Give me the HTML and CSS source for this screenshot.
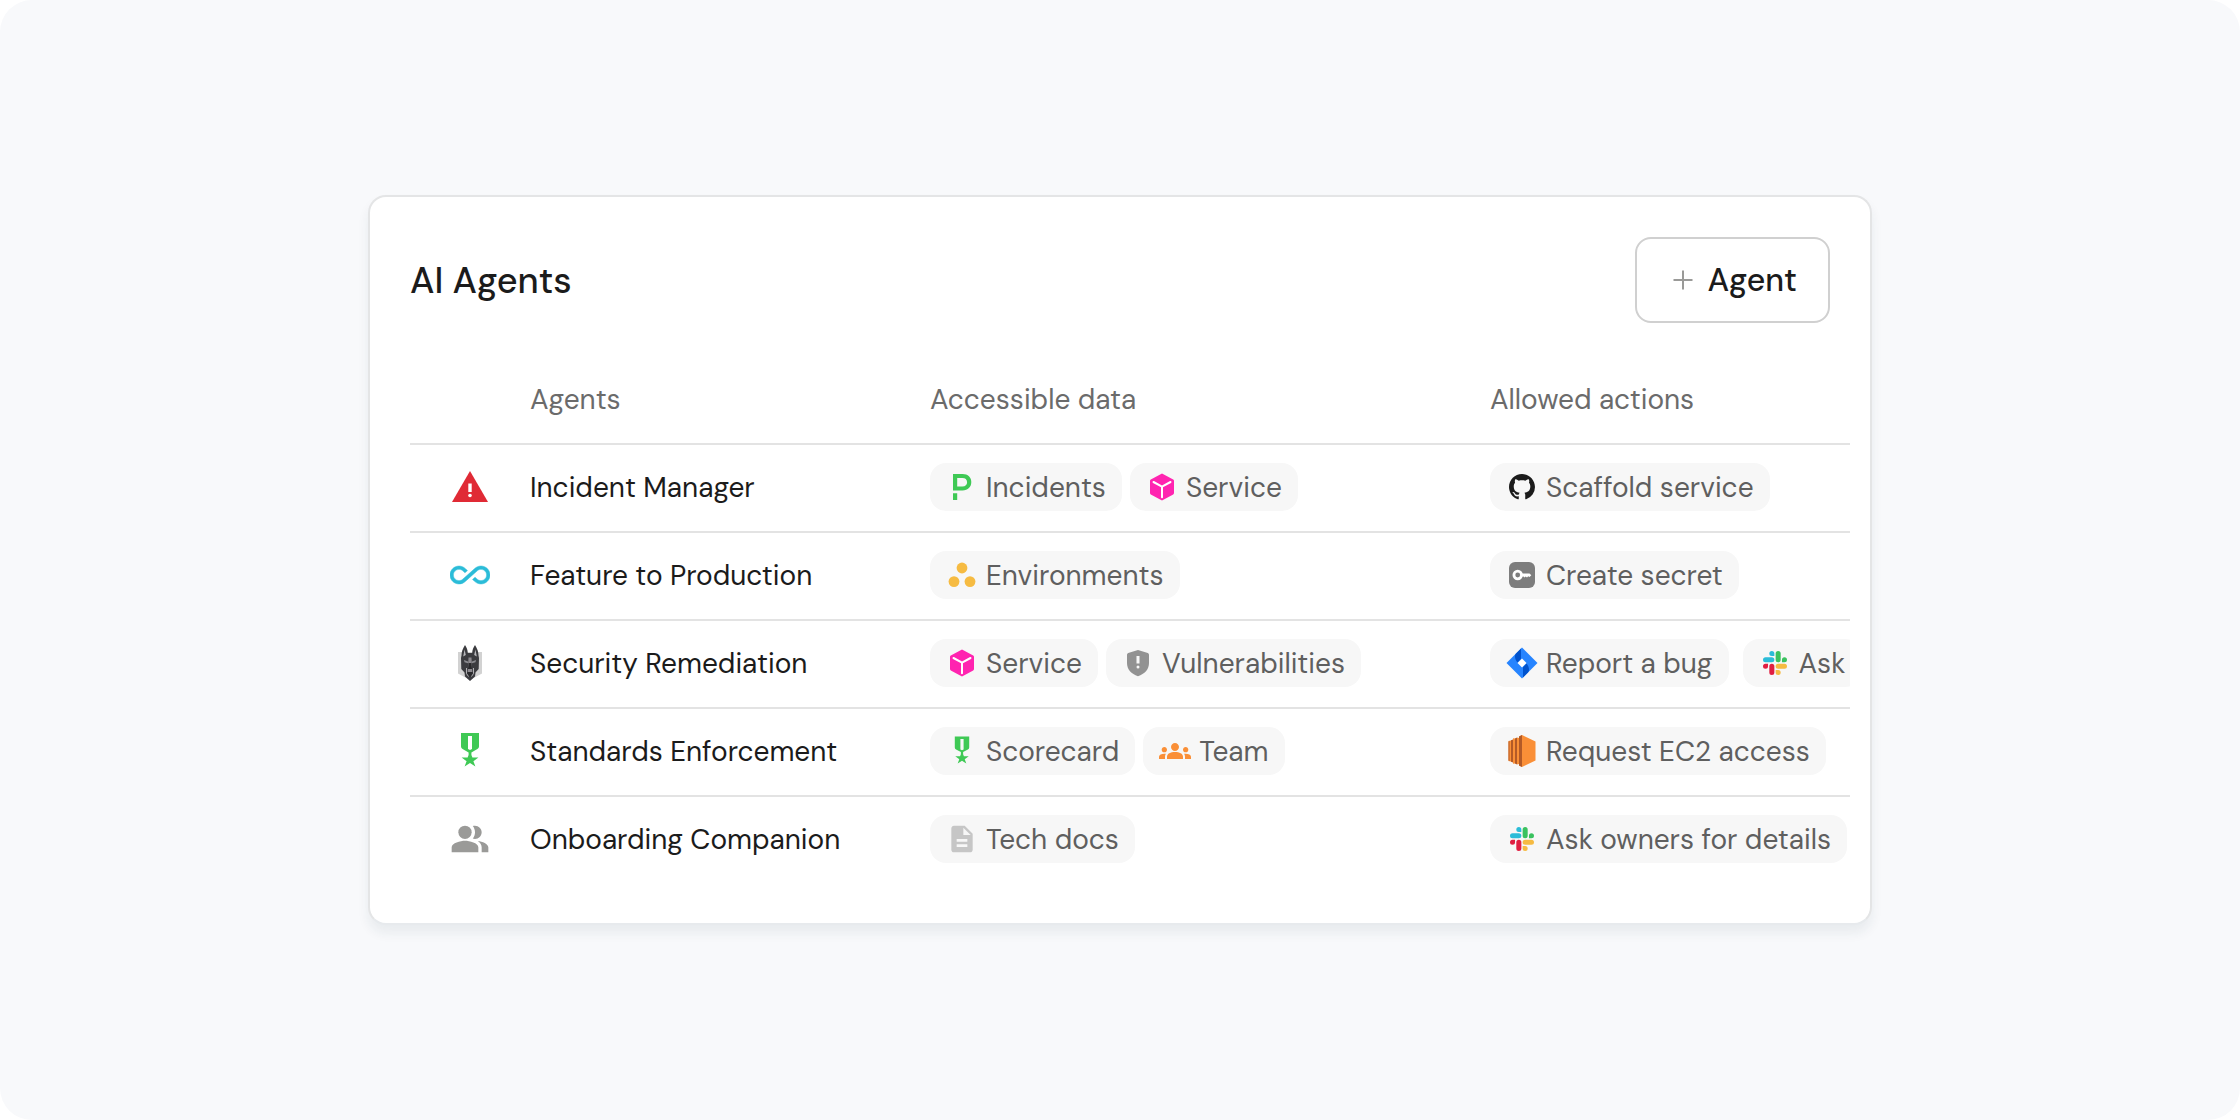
FILE: index.html
```html
<!DOCTYPE html>
<html lang="en">
<head>
  <meta charset="UTF-8" />
  <meta name="viewport" content="width=device-width, initial-scale=1.0"/>
  <title>AI Agents</title>
  <link rel="stylesheet" href="styles.css">
</head>
<body>
  <!-- Icons used more than once -->
  <svg class="sprite" aria-hidden="true">
    <symbol id="medal" viewBox="0 0 40 40">
      <path fill="#3fc955" fill-rule="evenodd" d="M11 2h18v13.5a3 3 0 0 1-1.6 2.6L21.4 21.4V24l1 2.6h6l-5 3.6 2 5.3-5.4-3.4-5.4 3.4 2-5.3-5-3.6h6l1-2.6v-2.6l-6-3.3A3 3 0 0 1 11 15.5zM18 5v13l2 1 2-1V5z"/>
    </symbol>
    <symbol id="cube" viewBox="0 0 32 32">
      <path fill="#ff24b0" d="M16 2.5l11.2 6.1a1.6 1.6 0 0 1 .8 1.4v12a1.6 1.6 0 0 1-.8 1.4L16 29.5 4.8 23.4A1.6 1.6 0 0 1 4 22V10a1.6 1.6 0 0 1 .8-1.4z"/>
      <path fill="none" stroke="#fff" stroke-width="2" stroke-linecap="round" stroke-linejoin="round" d="M7.5 11l8.5 4.7 8.5-4.7M16 15.7v10.6"/>
    </symbol>
    <symbol id="slack" viewBox="-4 -4 32 32">
      <path fill="#e01e41" d="M5.042 15.165a2.528 2.528 0 0 1-2.52 2.523A2.528 2.528 0 0 1 0 15.165a2.527 2.527 0 0 1 2.522-2.52h2.52v2.52zM6.313 15.165a2.527 2.527 0 0 1 2.521-2.52 2.527 2.527 0 0 1 2.521 2.52v6.313A2.528 2.528 0 0 1 8.834 24a2.528 2.528 0 0 1-2.521-2.522v-6.313z"/>
      <path fill="#2bbcd8" d="M8.834 5.042a2.528 2.528 0 0 1-2.521-2.52A2.528 2.528 0 0 1 8.834 0a2.528 2.528 0 0 1 2.521 2.522v2.52H8.834zM8.834 6.313a2.528 2.528 0 0 1 2.521 2.521 2.528 2.528 0 0 1-2.521 2.521H2.522A2.528 2.528 0 0 1 0 8.834a2.528 2.528 0 0 1 2.522-2.521h6.312z"/>
      <path fill="#3ac25f" d="M18.956 8.834a2.528 2.528 0 0 1 2.522-2.521A2.528 2.528 0 0 1 24 8.834a2.528 2.528 0 0 1-2.522 2.521h-2.522V8.834zM17.688 8.834a2.528 2.528 0 0 1-2.523 2.521 2.527 2.527 0 0 1-2.52-2.521V2.522A2.527 2.527 0 0 1 15.165 0a2.528 2.528 0 0 1 2.523 2.522v6.312z"/>
      <path fill="#f6bb42" d="M15.165 18.956a2.528 2.528 0 0 1 2.523 2.522A2.528 2.528 0 0 1 15.165 24a2.527 2.527 0 0 1-2.52-2.522v-2.522h2.52zM15.165 17.688a2.527 2.527 0 0 1-2.52-2.523 2.526 2.526 0 0 1 2.52-2.52h6.313A2.527 2.527 0 0 1 24 15.165a2.528 2.528 0 0 1-2.522 2.523h-6.313z"/>
    </symbol>
  </svg>

  <main class="page">
    <section class="card">
      <header class="card-header">
        <h1>AI Agents</h1>
        <button type="button" class="add-button">
          <svg viewBox="0 0 20 20" aria-hidden="true"><path fill="none" stroke="#9a9a98" stroke-width="2" d="M10 .5v19M.5 10h19"/></svg>
          Agent
        </button>
      </header>

      <table class="agents">
        <colgroup>
          <col class="col-icon"><col class="col-name"><col class="col-data"><col>
        </colgroup>
        <thead>
          <tr>
            <td></td>
            <th scope="col">Agents</th>
            <th scope="col">Accessible data</th>
            <th scope="col">Allowed actions</th>
          </tr>
        </thead>
        <tbody>
          <tr>
            <td>
              <svg class="agent-icon" viewBox="0 0 40 40" aria-hidden="true">
                <path fill="#e02a35" d="M20 4l18 31H2z"/>
                <rect x="18.3" y="16.5" width="3.4" height="8.5" fill="#fff"/>
                <circle cx="20" cy="28.5" r="1.8" fill="#fff"/>
              </svg>
            </td>
            <td>Incident Manager</td>
            <td>
              <div class="chips">
                <span class="chip">
                  <svg viewBox="0 0 32 32" aria-hidden="true"><path fill="#3fc955" fill-rule="evenodd" d="M7 3h9.5c5.5 0 8.8 3.2 8.8 8.1s-3.3 8.4-8.8 8.4H7zM11.2 7v8.5h5.2c3 0 4.7-1.7 4.7-4.3S19.3 7 16.4 7zM7 22.3h4.2V29H7z"/></svg>
                  Incidents
                </span>
                <span class="chip"><svg aria-hidden="true"><use href="#cube"/></svg>Service</span>
              </div>
            </td>
            <td>
              <div class="chips actions">
                <span class="chip">
                  <svg viewBox="-1.85 -1.85 19.7 19.7" aria-hidden="true"><path fill="#1b1b1b" d="M8 0C3.58 0 0 3.58 0 8c0 3.54 2.29 6.53 5.47 7.59.4.07.55-.17.55-.38 0-.19-.01-.82-.01-1.49-2.01.37-2.53-.49-2.69-.94-.09-.23-.48-.94-.82-1.13-.28-.15-.68-.52-.01-.53.63-.01 1.08.58 1.23.82.72 1.21 1.87.87 2.33.66.07-.52.28-.87.51-1.07-1.78-.2-3.64-.89-3.64-3.95 0-.87.31-1.59.82-2.15-.08-.2-.36-1.02.08-2.12 0 0 .67-.21 2.2.82.64-.18 1.32-.27 2-.27s1.36.09 2 .27c1.53-1.04 2.2-.82 2.2-.82.44 1.1.16 1.92.08 2.12.51.56.82 1.27.82 2.15 0 3.07-1.87 3.75-3.65 3.95.29.25.54.73.54 1.48 0 1.07-.01 1.93-.01 2.2 0 .21.15.46.55.38A8.01 8.01 0 0 0 16 8c0-4.42-3.58-8-8-8z"/></svg>
                  Scaffold service
                </span>
              </div>
            </td>
          </tr>
          <tr>
            <td>
              <svg class="agent-icon" viewBox="0 0 24 24" aria-hidden="true"><path fill="#2bbcd8" stroke="#2bbcd8" stroke-width=".3" d="M18.6 6.62c-1.44 0-2.8.56-3.77 1.53L12 10.66 10.48 12h.01L7.8 14.39c-.64.64-1.49.99-2.4.99-1.87 0-3.39-1.51-3.39-3.38S3.53 8.62 5.4 8.62c.91 0 1.76.35 2.44 1.03l1.13 1 1.51-1.34L9.22 8.2C8.2 7.18 6.84 6.62 5.4 6.62 2.42 6.62 0 9.04 0 12s2.42 5.38 5.4 5.38c1.44 0 2.8-.56 3.77-1.53l2.83-2.5.01.01L13.52 12h-.01l2.69-2.39c.64-.64 1.49-.99 2.4-.99 1.87 0 3.39 1.51 3.39 3.38s-1.52 3.38-3.39 3.38c-.9 0-1.76-.35-2.44-1.03l-1.14-1.01-1.51 1.34 1.27 1.12c1.02 1.01 2.37 1.57 3.82 1.57 2.98 0 5.4-2.41 5.4-5.38s-2.42-5.37-5.4-5.37z"/></svg>
            </td>
            <td>Feature to Production</td>
            <td>
              <div class="chips">
                <span class="chip">
                  <svg viewBox="0 0 32 32" fill="#f6bb42" aria-hidden="true"><circle cx="16" cy="9" r="5.4"/><circle cx="8" cy="22.6" r="5.4"/><circle cx="24" cy="22.6" r="5.4"/></svg>
                  Environments
                </span>
              </div>
            </td>
            <td>
              <div class="chips actions">
                <span class="chip">
                  <svg viewBox="0 0 32 32" aria-hidden="true">
                    <rect x="3" y="3" width="26" height="26" rx="6" fill="#7d7d7d"/>
                    <circle cx="11.7" cy="16" r="3.8" fill="none" stroke="#fff" stroke-width="2.8"/>
                    <path fill="#fff" d="M15.5 14.5h8l1.8 1.7-1.8 1.9-1.3-.9-1.2 1.4-1.3-1.2-1.2 1.2-1-1.1h-2z"/>
                  </svg>
                  Create secret
                </span>
              </div>
            </td>
          </tr>
          <tr>
            <td>
              <svg class="agent-icon" viewBox="0 0 40 40" aria-hidden="true">
                <path fill="#d2d2d2" d="M8 9h24v21.5L20 37 8 30.5z"/>
                <path fill="#3b3b3f" d="M15 2c1.8 2.5 2.6 5 2.8 8h4.4c.2-3 1-5.5 2.8-8 2.3 3.6 3.5 7.2 3.5 10.5L29 15l-.3 11-3.2 3.500-.5 4L20 38l-5-4.500-.5-4-3.200-3.500L11 15l.5-2.500C11.500 9.200 12.700 5.600 15 2z"/>
                <path fill="#b9b9bd" d="M14.6 6.5l1.2 5.5-2.6 1.5zM25.4 6.5L24.2 12l2.6 1.5z"/>
                <path fill="#8b8b90" d="M14 17l4 1.5v1.8l-3.5-1zM26 17l-4 1.5v1.8l3.5-1z"/>
                <path fill="#8b888d" d="M18.5 14.5h3l.8 14.5h-4.6z"/>
                <path fill="#29292c" d="M18.5 20h3l.5 6h-4zM17.5 29h5v3L20 34l-2.5-2z"/>
                <path fill="none" stroke="#cfcfd2" stroke-width=".8" d="M16.5 25v5.5l2 3M23.5 25v5.5l-2 3"/>
              </svg>
            </td>
            <td>Security Remediation</td>
            <td>
              <div class="chips">
                <span class="chip"><svg aria-hidden="true"><use href="#cube"/></svg>Service</span>
                <span class="chip">
                  <svg viewBox="0 0 32 32" aria-hidden="true">
                    <path fill="#929292" d="M16 3l9.8 3a1.8 1.8 0 0 1 1.2 1.7V16c0 6.5-4.3 11-11 13.2C9.3 27 5 22.5 5 16V7.7A1.8 1.8 0 0 1 6.2 6z"/>
                    <rect x="14.5" y="9" width="3" height="7.5" fill="#f7f7f7"/>
                    <circle cx="16" cy="20" r="1.5" fill="#f7f7f7"/>
                  </svg>
                  Vulnerabilities
                </span>
              </div>
            </td>
            <td>
              <div class="chips actions">
                <span class="chip">
                  <svg viewBox="0 0 32 32" aria-hidden="true">
                    <path fill="#2684ff" d="M16 .5L31.5 16 16 31.5.5 16z"/>
                    <path fill="#0052cc" d="M15 1.5v10.5l-3.5 3.5C8.5 12.5 8.5 8 10 6.5zM17 30.5V20l3.5-3.5c3 3 3 7.5 1.5 9z"/>
                    <path fill="#fff" d="M16 11.5l4.5 4.5-4.5 4.5-4.5-4.5z"/>
                  </svg>
                  Report a bug
                </span>
                <span class="chip"><svg aria-hidden="true"><use href="#slack"/></svg>Ask</span>
              </div>
            </td>
          </tr>
          <tr>
            <td><svg class="agent-icon" aria-hidden="true"><use href="#medal"/></svg></td>
            <td>Standards Enforcement</td>
            <td>
              <div class="chips">
                <span class="chip"><svg aria-hidden="true"><use href="#medal"/></svg>Scorecard</span>
                <span class="chip">
                  <svg viewBox="0 0 24 24" aria-hidden="true"><path fill="#fa8f37" d="M12 12.75c1.63 0 3.07.39 4.24.9 1.08.48 1.76 1.56 1.76 2.73V18H6v-1.61c0-1.18.68-2.26 1.76-2.73 1.17-.52 2.61-.91 4.24-.91zM4 13c1.1 0 2-.9 2-2s-.9-2-2-2-2 .9-2 2 .9 2 2 2zM5.13 14.1C4.76 14.04 4.39 14 4 14c-.99 0-1.93.21-2.78.58C.48 14.9 0 15.62 0 16.43V18h4.5v-1.61c0-.83.23-1.61.63-2.29zM20 13c1.1 0 2-.9 2-2s-.9-2-2-2-2 .9-2 2 .9 2 2 2zM24 16.43c0-.81-.48-1.53-1.22-1.85-.85-.37-1.79-.58-2.78-.58-.39 0-.76.04-1.13.1.4.68.63 1.46.63 2.29V18H24v-1.57zM12 6c1.66 0 3 1.34 3 3s-1.34 3-3 3-3-1.34-3-3 1.34-3 3-3z"/></svg>
                  Team
                </span>
              </div>
            </td>
            <td>
              <div class="chips actions">
                <span class="chip">
                  <svg viewBox="0 0 32 32" aria-hidden="true">
                    <path fill="#fa8f37" d="M16 0l13.5 6.5v19L16 32l-3-1.5V29l-2 .5v-1.3l-4 .6V27l-4.500-1V6L7 5V3.200l4 .6V2.500l2 .5V1.500z"/>
                    <path fill="#b35a27" d="M16 0v32l-3-1.500v-29zM11 2.500v27l-2-1V3.500zM7 4.500v23l-2-.7V5.200zM3.500 6v20l-1-.4V6.400z"/>
                  </svg>
                  Request EC2 access
                </span>
              </div>
            </td>
          </tr>
          <tr>
            <td>
              <svg class="agent-icon" viewBox="0 0 24 24" fill="#9a9a98" aria-hidden="true">
                <circle cx="9" cy="8" r="4"/>
                <path d="M16.67 13.13C18.04 14.06 19 15.32 19 17v3h4v-3c0-2.18-3.57-3.47-6.33-3.87zM15 12c2.21 0 4-1.79 4-4s-1.79-4-4-4c-.47 0-.91.1-1.33.24C14.5 5.27 15 6.58 15 8s-.5 2.73-1.33 3.76c.42.14.86.24 1.33.24zM9 13c-2.67 0-8 1.34-8 4v3h16v-3c0-2.66-5.33-4-8-4z"/>
              </svg>
            </td>
            <td>Onboarding Companion</td>
            <td>
              <div class="chips">
                <span class="chip">
                  <svg viewBox="0 0 24 24" aria-hidden="true"><path fill="#c6c6c6" d="M14 2H6c-1.1 0-1.99.9-1.99 2L4 20c0 1.1.89 2 1.99 2H18c1.1 0 2-.9 2-2V8l-6-6zm2 16H8v-2h8v2zm0-4H8v-2h8v2zm-3-5V3.5L18.5 9H13z"/></svg>
                  Tech docs
                </span>
              </div>
            </td>
            <td>
              <div class="chips actions">
                <span class="chip"><svg aria-hidden="true"><use href="#slack"/></svg>Ask owners for details</span>
              </div>
            </td>
          </tr>
        </tbody>
      </table>
    </section>
  </main>
</body>
</html>
```
FILE: styles.css
```css
* {
  box-sizing: border-box;
}
body {
  margin: 0;
  background: #fff;
  color: #1b1b1b;
  font-family: "DM Sans", Inter, sans-serif;
  font-size: 28px;
}
.sprite {
  display: none;
}
.page {
  display: flex;
  align-items: center;
  justify-content: center;
  min-height: 100vh;
  padding: 40px;
  background: #f8f9fb;
  border-radius: 32px;
}
.card {
  width: 100%;
  max-width: 1504px;
  padding: 40px 20px 40px 40px;
  background: #fff;
  border: 2px solid #e4e5e6;
  border-bottom-color: #e7eaed;
  border-radius: 18px;
  box-shadow: 0 8px 12px rgba(30, 50, 70, 0.07);
}
.card-header {
  display: flex;
  align-items: center;
  justify-content: space-between;
  margin: 0 20px 34px 0;
}
h1 {
  margin: 0;
  font-size: 36px;
  font-weight: 500;
}
.add-button {
  display: flex;
  align-items: center;
  gap: 14px;
  height: 86px;
  padding: 0 31px 0 36px;
  background: #fff;
  border: 2px solid #d0d0d0;
  border-radius: 16px;
  color: #1b1b1b;
  font-family: inherit;
  font-size: 32px;
  font-weight: 500;
  cursor: pointer;
}
.add-button svg {
  width: 20px;
  height: 20px;
}

.agents {
  width: 100%;
  table-layout: fixed;
  border-spacing: 0;
}
.col-icon {
  width: 120px;
}
.col-name {
  width: 400px;
}
.col-data {
  width: 560px;
}
.agents th,
.agents td {
  height: 88px;
  padding: 0 0 2px;
  border-bottom: 2px solid #e3e3e3;
  text-align: left;
  white-space: nowrap;
  overflow: hidden;
}
.agents th {
  color: #6b6b6b;
  font-weight: 400;
}
.agents tbody tr:last-child td {
  height: 86px;
  border-bottom: none;
}
.agent-icon {
  display: block;
  width: 40px;
  height: 40px;
  margin: 0 auto;
}

.chips {
  display: flex;
  gap: 8px;
}
.actions {
  gap: 14px;
}
.chip {
  display: flex;
  flex-shrink: 0;
  align-items: center;
  gap: 8px;
  height: 48px;
  padding: 0 16px;
  background: #f7f7f7;
  border-radius: 16px;
  color: #5f5f5f;
}
.chip svg {
  width: 32px;
  height: 32px;
}
```
